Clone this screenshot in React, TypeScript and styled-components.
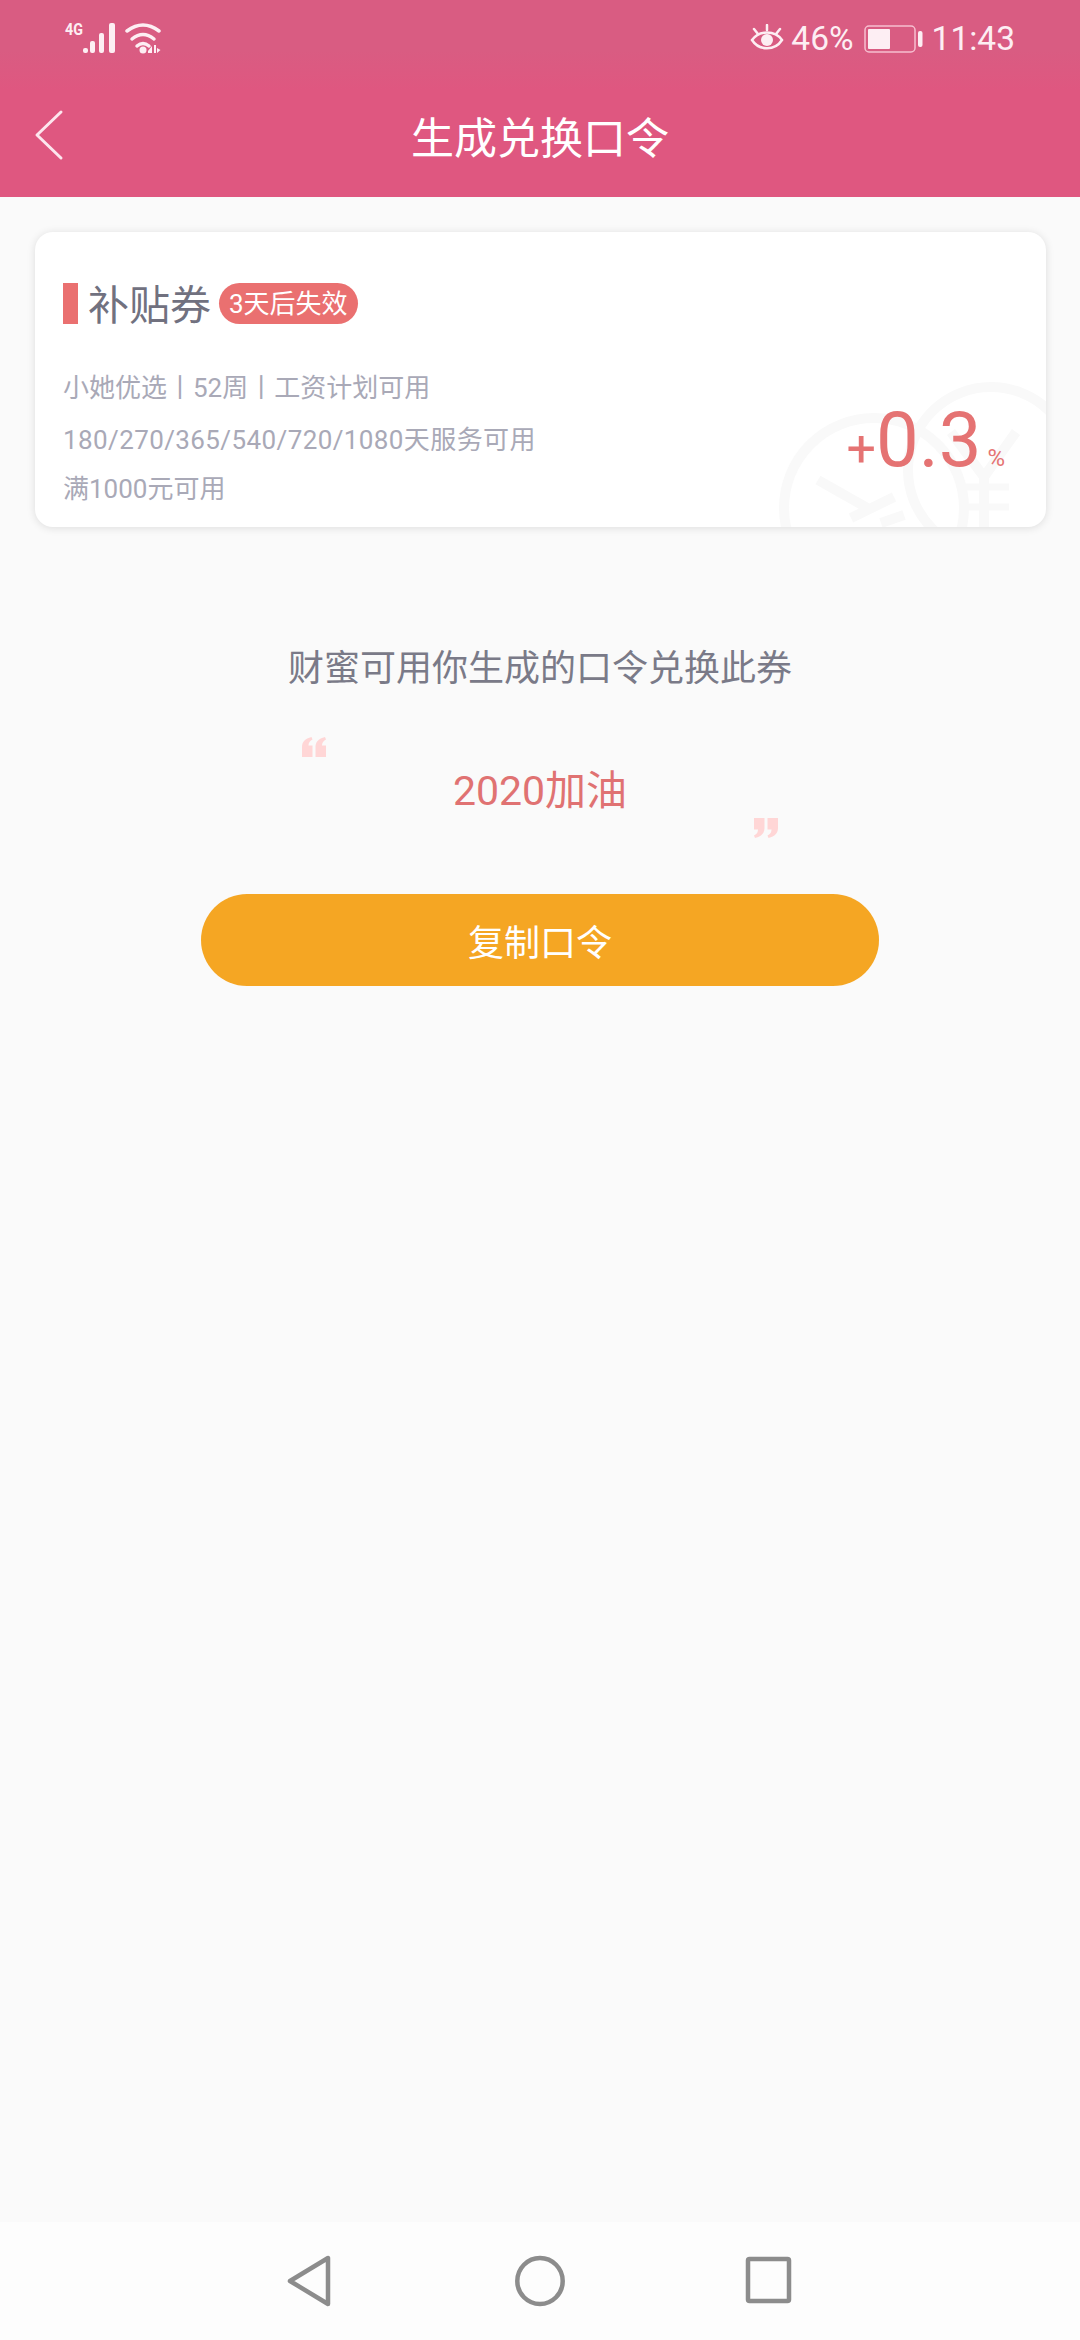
import React from "react";
import styled, { createGlobalStyle } from "styled-components";

const GlobalStyle = createGlobalStyle`
  html, body {
    margin: 0;
    padding: 0;
    background: #fafafa;
    font-family: Roboto, "Noto Sans CJK SC", sans-serif;
  }
`;

const Page = styled.div`
  width: 1080px;
  height: 2340px;
  display: flex;
  flex-direction: column;
  overflow: hidden;
  background: #fafafa;
`;

const TopBar = styled.div`
  flex: none;
  background: linear-gradient(#d95c82 0, #d95c82 50px, #df5780 90px, #df5780 100%);
`;

const StatusBar = styled.div`
  height: 72px;
  box-sizing: border-box;
  padding: 21px 65px 0 63px;
  display: flex;
  justify-content: space-between;
  align-items: flex-start;
  color: #fdeef3;
`;

const SignalIcons = styled.svg`
  margin-top: -1px;
`;

const StatusGroup = styled.div`
  display: flex;
  align-items: center;
  height: 36px;
`;

const StatusText = styled.span<{ $gap?: number }>`
  font-size: 33.5px;
  line-height: 36px;
  margin-left: ${(p) => p.$gap ?? 0}px;
`;

const BatteryIcon = styled.svg`
  margin-left: 10px;
`;

const Header = styled.header`
  height: 125px;
  display: flex;
  align-items: center;
  justify-content: center;
  position: relative;
  color: #fff;
  font-size: 43px;
  box-sizing: border-box;
`;

const BackIcon = styled.svg`
  position: absolute;
  left: 34px;
  top: 37px;
`;

const Card = styled.section`
  margin: 35px 34px 0 35px;
  height: 295px;
  flex: none;
  box-sizing: border-box;
  padding: 51px 28px 0;
  position: relative;
  overflow: hidden;
  background: #fff;
  border-radius: 18px;
  box-shadow: 0 1px 8px rgba(0, 0, 0, 0.12);
`;

const Watermark = styled.svg`
  position: absolute;
  right: 0;
  bottom: 0;
`;

const TitleRow = styled.div`
  display: flex;
  align-items: center;
  height: 41px;
  margin-bottom: 39px;
`;

const Accent = styled.span`
  width: 15px;
  height: 41px;
  background: #ea7070;
`;

const CardTitle = styled.h2`
  margin: 0 8px 0 10px;
  padding-top: 5px;
  font-size: 41px;
  line-height: 41px;
  font-weight: 400;
  color: #71717f;
`;

const Badge = styled.span`
  height: 41px;
  padding: 0 10px;
  border-radius: 21px;
  background: #ea7070;
  color: #fff;
  font-size: 26px;
  line-height: 43px;
`;

const Rule = styled.p<{ $height: number; $spacing?: number }>`
  margin: 0;
  font-size: 26px;
  line-height: ${(p) => p.$height}px;
  letter-spacing: ${(p) => p.$spacing ?? 0}px;
  color: #a9a9b7;
  white-space: nowrap;
  position: relative;
`;

const Bonus = styled.div`
  position: absolute;
  right: 41px;
  bottom: 52px;
  display: flex;
  align-items: baseline;
  color: #e57373;
`;

const BonusSign = styled.span`
  font-size: 52px;
  line-height: 1;
`;

const BonusValue = styled.span`
  font-size: 76px;
  line-height: 70px;
`;

const BonusUnit = styled.span`
  font-size: 24px;
  line-height: 1;
  margin-left: 6px;
`;

const Hint = styled.p`
  margin: 119px 0 0;
  text-align: center;
  font-size: 36px;
  line-height: 46px;
  color: #7a7a88;
`;

const CodeBox = styled.div`
  width: 478px;
  height: 101px;
  margin: 45px auto 0;
  padding-bottom: 2px;
  box-sizing: border-box;
  position: relative;
  display: flex;
  align-items: center;
  justify-content: center;
  color: #e07272;
  font-size: 41px;
`;

const Quote = styled.svg<{ $end?: boolean }>`
  position: absolute;
  ${(p) => (p.$end ? "right: 0; bottom: 0; transform: rotate(180deg);" : "left: 0; top: 0;")}
`;

const CopyButton = styled.button`
  display: block;
  width: 678px;
  height: 92px;
  flex: none;
  margin: 56px auto 0;
  padding: 0;
  border: 0;
  border-radius: 46px;
  background: #f5a623;
  color: #fff;
  font-family: inherit;
  font-size: 36px;
`;

const NavBar = styled.nav`
  margin-top: auto;
  height: 118px;
  flex: none;
  position: relative;
  background: #fdfdfd;
`;

const NavIcon = styled.svg<{ $left: number }>`
  position: absolute;
  left: ${(p) => p.$left}px;
  top: 33px;
`;

function QuoteMark({ end }: { end?: boolean }) {
  return (
    <Quote $end={end} width="26" height="20" viewBox="0 0 26 20" fill="#ffd6d6">
      <path d="M1 20V10C1 5 4 1.500 10.500 0l1 2.500C8.500 4 7.500 6 7.500 8.500h4V20z" />
      <path d="M14.500 20V10c0-5 3-8.500 9.500-10l1 2.500c-3 1.500-4 3.500-4 6h4V20z" />
    </Quote>
  );
}

export default function App() {
  return (
    <Page>
      <GlobalStyle />
      <TopBar>
        <StatusBar>
          <StatusGroup>
            <SignalIcons width="100" height="36" viewBox="0 0 100 36" fill="#fdeef3">
              <text x="2" y="14" fontFamily="'Liberation Sans Narrow', Roboto, sans-serif" fontSize="16" fontWeight="700" textLength="18" lengthAdjust="spacingAndGlyphs">4G</text>
              <rect x="20" y="27" width="5" height="5" rx="2" />
              <rect x="27" y="20" width="5" height="12" rx="2" />
              <rect x="36" y="12" width="5" height="20" rx="2" />
              <rect x="46" y="2" width="6" height="30" rx="2" />
              <g fill="none" stroke="#fdeef3" strokeWidth="3.500" strokeLinecap="round">
                <path d="M64 10Q80 -2 96 10" />
                <path d="M69 18Q80 9 91 18" />
                <path d="M74 25Q80 20 86 25" />
              </g>
              <circle cx="80" cy="29" r="3.500" />
              <path d="M85 32v-2l4-5v7zM91 24h2v8h-2zM94 27l3.500 2-3.500 3z" />
            </SignalIcons>
          </StatusGroup>
          <StatusGroup>
            <svg width="34" height="30" viewBox="0 0 34 30" fill="none" stroke="#fdeef3" strokeWidth="2.500" strokeLinecap="round">
              <path d="M2 16C9 6 25 6 32 16C25 27 9 27 2 16Z" />
              <circle cx="17" cy="16" r="6" fill="#fdeef3" stroke="none" />
              <path d="M4 5l4 5M17 1v5M30 5l-4 5" />
            </svg>
            <StatusText $gap={7}>46%</StatusText>
            <BatteryIcon width="59" height="28" viewBox="0 0 59 28">
              <rect x="1" y="1" width="50" height="26" rx="4" fill="none" stroke="#f6bfd0" strokeWidth="1.500" />
              <rect x="4" y="4" width="22" height="20" rx="1" fill="#fdeef3" />
              <rect x="54" y="6" width="4.500" height="16" rx="2" fill="#fdeef3" />
            </BatteryIcon>
            <StatusText $gap={9}>11:43</StatusText>
          </StatusGroup>
        </StatusBar>
        <Header>
          <BackIcon width="30" height="52" viewBox="0 0 30 52" fill="none" stroke="#fde6ee" strokeWidth="3" strokeLinecap="round" strokeLinejoin="round">
            <path d="M27 3L3 26L27 49" />
          </BackIcon>
          生成兑换口令
        </Header>
      </TopBar>
      <Card>
        <Watermark width="290" height="160" viewBox="0 0 290 160" fill="none" stroke="#f9f9f9" strokeWidth="10">
          <circle cx="118" cy="141" r="90" />
          <circle cx="235" cy="103" r="83" />
          <path d="M62 113L115 143M95 151L138 130M125 156L148 148" />
          <path d="M195 65L228 110L260 65M228 110V160" />
          <path d="M203 120H253M203 140H253" strokeWidth="7" />
        </Watermark>
        <TitleRow>
          <Accent />
          <CardTitle>补贴券</CardTitle>
          <Badge>3天后失效</Badge>
        </TitleRow>
        <Rule $height={50}>小她优选丨52周丨工资计划可用</Rule>
        <Rule $height={54} $spacing={0.4}>180/270/365/540/720/1080天服务可用</Rule>
        <Rule $height={44}>满1000元可用</Rule>
        <Bonus>
          <BonusSign>+</BonusSign>
          <BonusValue>0.3</BonusValue>
          <BonusUnit>%</BonusUnit>
        </Bonus>
      </Card>
      <Hint>财蜜可用你生成的口令兑换此券</Hint>
      <CodeBox>
        <QuoteMark />
        2020加油
        <QuoteMark end />
      </CodeBox>
      <CopyButton>复制口令</CopyButton>
      <NavBar>
        <NavIcon $left={287} width="44" height="52" viewBox="0 0 44 52" fill="none" stroke="#8c8c8c" strokeWidth="4.500" strokeLinejoin="round">
          <path d="M41 3V49L3 26Z" />
        </NavIcon>
        <NavIcon $left={515} width="50" height="52" viewBox="0 0 50 52" fill="none" stroke="#8c8c8c" strokeWidth="4.500">
          <ellipse cx="25" cy="26" rx="22.700" ry="23" />
        </NavIcon>
        <NavIcon $left={745} width="48" height="52" viewBox="0 0 48 52" fill="none" stroke="#8c8c8c" strokeWidth="4.500" strokeLinejoin="round">
          <rect x="3" y="4" width="41" height="42" rx="1.500" />
        </NavIcon>
      </NavBar>
    </Page>
  );
}
